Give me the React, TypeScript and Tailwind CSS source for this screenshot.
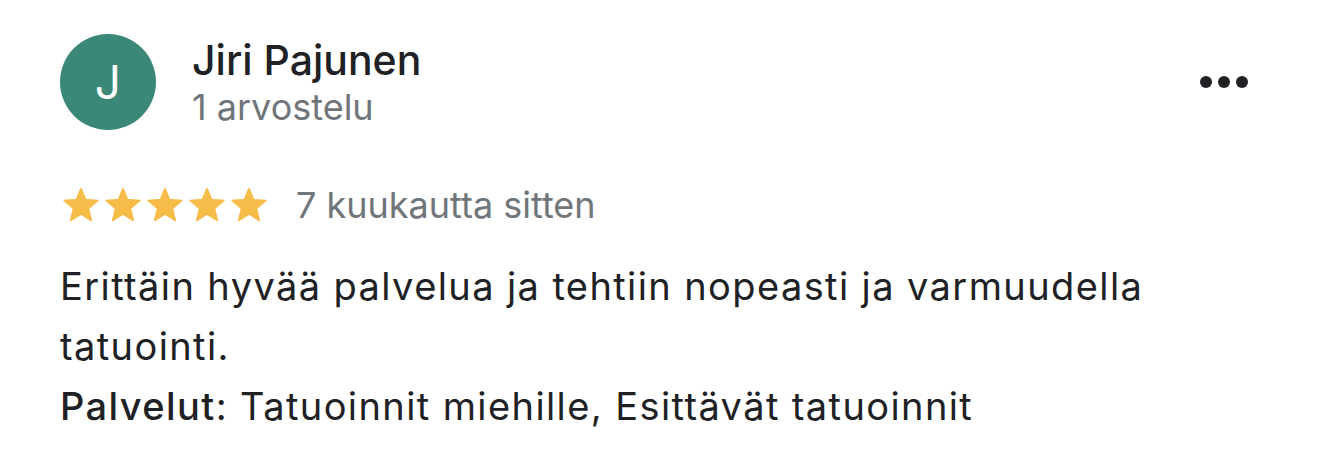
import React from 'react';

const Star: React.FC = () => (
  <svg width="38" height="37" viewBox="0 0 38 37" className="block">
    <path
      d="M19 1.5 L23.6 12.6 L35.8 13.6 L26.5 21.5 L29.4 33.5 L19 27.1 L8.6 33.5 L11.5 21.5 L2.2 13.6 L14.4 12.6 Z"
      fill="#f6bc4a"
      stroke="#f6bc4a"
      strokeWidth="1.5"
      strokeLinejoin="round"
    />
  </svg>
);

const App: React.FC = () => {
  return (
    <div className="w-[1320px] h-[451px] bg-white px-[60px] pt-[34px] font-['Inter',sans-serif] text-[#202124]">
      <div className="flex items-center">
        <div className="w-24 h-24 rounded-full bg-[#3b8778] flex items-center justify-center text-white text-[46px] leading-none">
          J
        </div>
        <div className="ml-[36px] flex-1">
          <div className="text-[41px] leading-[48px] font-medium">Jiri Pajunen</div>
          <div className="mt-[1px] text-[36px] leading-[44px] text-[#70757a]">1 arvostelu</div>
        </div>
        <div className="flex gap-[6px] mr-[12px]">
          <span className="w-3 h-3 rounded-full bg-[#202124]" />
          <span className="w-3 h-3 rounded-full bg-[#202124]" />
          <span className="w-3 h-3 rounded-full bg-[#202124]" />
        </div>
      </div>

      <div className="mt-[53px] flex items-center h-[44px]">
        <div className="flex gap-[4px] ml-[2px]">
          <Star />
          <Star />
          <Star />
          <Star />
          <Star />
        </div>
        <span className="ml-[28px] text-[36px] leading-[44px] text-[#70757a]">7 kuukautta sitten</span>
      </div>

      <div className="mt-[29px] text-[38px] leading-[60px] tracking-[1.4px] w-[1180px]">
        <p>Erittäin hyvää palvelua ja tehtiin nopeasti ja varmuudella tatuointi.</p>
        <p>
          <span className="font-medium">Palvelut</span>: Tatuoinnit miehille, Esittävät tatuoinnit
        </p>
      </div>
    </div>
  );
};

export default App;
